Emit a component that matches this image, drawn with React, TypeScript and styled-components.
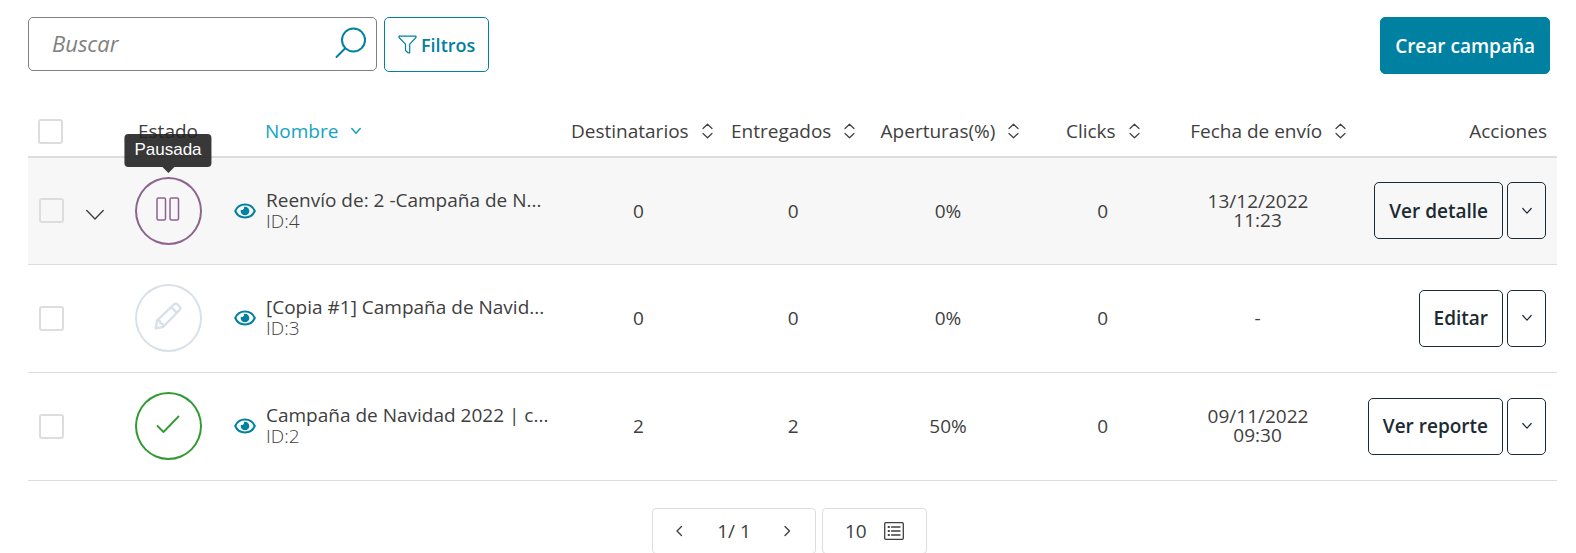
import React from "react";
import styled, { createGlobalStyle, css } from "styled-components";

const color = {
  text: "#404040",
  strong: "#1c2b33",
  primary: "#0081a1",
  active: "#12a3c1",
  line: "#dddddd",
  paused: "#8c648e",
  draft: "#d8e1e9",
  sent: "#339a33",
};

const GlobalStyle = createGlobalStyle`
  *, *::before, *::after { box-sizing: border-box; }
  body {
    margin: 0;
    background: #fff;
    color: ${color.text};
    font-family: "Open Sans", "Liberation Sans", sans-serif;
    font-size: 19px;
    line-height: 20px;
  }
  button, input { font: inherit; color: inherit; }
  svg { display: block; flex: none; }
`;

const Page = styled.main`
  padding: 17px 19px 0 28px;
`;

const Toolbar = styled.div`
  display: flex;
  align-items: flex-start;
  gap: 7px;
  padding-right: 7px;
  margin-bottom: 32px;
`;

const SearchBox = styled.label`
  display: flex;
  align-items: center;
  width: 349px;
  height: 54px;
  padding: 0 9px 2px 23px;
  border: 1px solid #808080;
  border-radius: 5px;
`;

const SearchInput = styled.input`
  flex: 1;
  min-width: 0;
  padding: 0;
  border: 0;
  outline: 0;
  background: none;
  font-size: 22px;
  line-height: 30px;
  &::placeholder {
    color: #808080;
    font-style: italic;
    opacity: 1;
  }
`;

const Button = styled.button<{ $kind?: "filter" | "primary" | "toggle" }>`
  display: inline-flex;
  align-items: center;
  justify-content: center;
  gap: 4px;
  height: 57px;
  padding: 0 14px;
  border: 1px solid ${color.strong};
  border-radius: 5px;
  background: transparent;
  color: ${color.strong};
  font-weight: 600;
  white-space: nowrap;
  cursor: pointer;
  ${({ $kind }) =>
    $kind === "filter" &&
    css`
      height: 55px;
      border-color: ${color.primary};
      color: ${color.primary};
      padding: 0 13px;
      font-size: 18px;
    `}
  ${({ $kind }) =>
    $kind === "primary" &&
    css`
      margin-left: auto;
      border-color: ${color.primary};
      background: ${color.primary};
      color: #fff;
    `}
  ${({ $kind }) =>
    $kind === "toggle" &&
    css`
      width: 39px;
      padding: 0;
    `}
`;

const Table = styled.table`
  width: 100%;
  table-layout: fixed;
  border-collapse: collapse;
`;

const Col = styled.col<{ $w?: number }>`
  ${({ $w }) => $w && `width: ${$w}px;`}
`;

type Align = "left" | "center" | "right";

const HeadCell = styled.th<{ $align?: Align; $indent?: number }>`
  height: 51px;
  padding: 0 10px 0 ${({ $indent = 10 }) => $indent}px;
  border-bottom: 2px solid ${color.line};
  font-weight: 400;
  text-align: ${({ $align = "center" }) => $align};
  white-space: nowrap;
`;

const Row = styled.tr<{ $hover?: boolean }>`
  height: 108px;
  border-bottom: 1px solid ${color.line};
  background: ${({ $hover }) => ($hover ? "#f7f7f7" : "transparent")};
  &:first-child {
    height: 107px;
  }
`;

const Cell = styled.td<{ $align?: Align; $indent?: number }>`
  padding: 0 10px 0 ${({ $indent = 10 }) => $indent}px;
  text-align: ${({ $align = "center" }) => $align};
`;

const Checkbox = styled.input`
  display: block;
  appearance: none;
  width: 25px;
  height: 25px;
  margin: 0;
  border: 2px solid ${color.line};
  border-radius: 3px;
`;

const SortButton = styled.button<{ $active?: boolean }>`
  display: inline-flex;
  align-items: center;
  gap: 13px;
  padding: 0;
  border: 0;
  background: none;
  color: ${({ $active }) => ($active ? color.active : "inherit")};
  cursor: pointer;
`;

const IconButton = styled.button`
  display: block;
  padding: 0;
  border: 0;
  background: none;
  color: ${({ color: c }) => c || "inherit"};
  cursor: pointer;
`;

const ExpandButton = styled(IconButton)`
  padding-top: 8px;
`;

const Status = styled.div<{ $tone: string }>`
  position: relative;
  display: flex;
  align-items: center;
  justify-content: center;
  width: 67px;
  height: 68px;
  margin: 0 auto;
  padding-bottom: 4px;
  border: 2px solid ${({ $tone }) => $tone};
  border-radius: 50%;
  color: ${({ $tone }) => $tone};
`;

const Tooltip = styled.span`
  position: absolute;
  left: 50%;
  bottom: calc(100% + 12px);
  transform: translateX(-50%);
  padding: 6px 10px 7px;
  border-radius: 4px;
  background: rgba(34, 34, 34, 0.9);
  color: #fff;
  font-family: "Liberation Sans", Arial, sans-serif;
  font-size: 17px;
  &::after {
    content: "";
    position: absolute;
    top: 100%;
    left: 50%;
    margin-left: -6px;
    border: 6px solid transparent;
    border-bottom: 0;
    border-top-color: rgba(34, 34, 34, 0.9);
  }
`;

const NameBlock = styled.div`
  display: flex;
  align-items: center;
  gap: 10px;
  white-space: nowrap;
`;

const NameText = styled.div`
  line-height: 21px;
`;

const Name = styled.div``;

const CampaignId = styled.div`
  font-weight: 300;
`;

const DateText = styled.time`
  display: block;
  width: 100px;
  margin: 0 auto;
  line-height: 19px;
`;

const Actions = styled.div`
  display: flex;
  justify-content: flex-end;
  gap: 4px;
  padding-right: 1px;
`;

const Pagination = styled.nav`
  display: flex;
  justify-content: center;
  gap: 6px;
  margin-top: 27px;
  padding-right: 6px;
`;

const PagerBox = styled.div<{ $w: number }>`
  display: flex;
  align-items: center;
  justify-content: space-between;
  width: ${({ $w }) => $w}px;
  height: 46px;
  padding: 0 22px;
  border: 1px solid ${color.line};
  border-radius: 4px;
`;

const line = {
  fill: "none",
  stroke: "currentColor",
  strokeLinecap: "round" as const,
  strokeLinejoin: "round" as const,
  "aria-hidden": true,
};

const SearchIcon = () => (
  <svg width="32" height="32" viewBox="0 0 32 32" {...line} stroke={color.primary} strokeWidth="2">
    <circle cx="18.5" cy="13" r="11.5" />
    <path d="M10 21.5 1.5 30" />
  </svg>
);

const FilterIcon = () => (
  <svg width="19" height="19" viewBox="0 0 19 19" {...line} strokeWidth="1.2">
    <path d="M1 1.2h17v1.3l-6.3 6.6v8.7H10l-2.5-2.3V9.1L1 2.5z" />
  </svg>
);

const SortIcon = () => (
  <svg width="11" height="16" viewBox="0 0 11 16" {...line} strokeWidth="1.2">
    <path d="M1 5.5 5.500 1.200 10 5.500M1 10.500 5.500 14.800 10 10.500" />
  </svg>
);

const ChevronDown = ({ size = 10, weight = 1.2 }: { size?: number; weight?: number }) => (
  <svg width={size} height={size} viewBox={`0 0 ${size} ${size}`} {...line} strokeWidth={weight}>
    <path d={`M.8 ${size / 4}L${size / 2} ${size * 0.72}L${size - 0.8} ${size / 4}`} />
  </svg>
);

const ChevronSide = ({ next }: { next?: boolean }) => (
  <svg width="10" height="12" viewBox="0 0 10 12" {...line} strokeWidth="1.4">
    <path d={next ? "M2 1.500 6.500 6 2 10.500" : "M6.500 1.500 2 6l4.500 4.500"} />
  </svg>
);

const EyeIcon = () => (
  <svg width="22" height="16" viewBox="0 0 22 16" fill="none" aria-hidden>
    <path d="M1.200 8C5-.6 17-.6 20.800 8 17 16.600 5 16.600 1.200 8z" stroke="currentColor" strokeWidth="2" strokeLinejoin="round" />
    <circle cx="11" cy="8" r="4.300" fill="currentColor" />
    <path d="M6.500 6.800 7.500 4.500 9.500 3.500 10.200 5 8.800 7z" fill="#fff" />
  </svg>
);

const PauseIcon = () => (
  <svg width="24" height="24" viewBox="0 0 24 24" {...line} strokeWidth="1.5">
    <rect x="1" y="1" width="8.5" height="22" rx="1.5" />
    <rect x="14" y="1" width="8.5" height="22" rx="1.5" />
  </svg>
);

const PencilIcon = () => (
  <svg width="28" height="28" viewBox="0 0 28 28" {...line} strokeWidth="2.4">
    <path d="M1.800 26.200l1.200-7.500L19.500 2.800c1.400-1.300 3.200-1.300 4.500 0l1.200 1.200c1.300 1.300 1.300 3 0 4.400L9 25z" />
    <path d="M17.300 5.200 22.800 10.700M3.500 18.700c2.300-.200 3.200.8 2.900 2.700 2-.2 3 .8 2.800 3" />
  </svg>
);

const CheckIcon = () => (
  <svg width="24" height="24" viewBox="0 0 24 24" {...line} strokeWidth="1.8">
    <path d="M1.500 14 7.500 20 22.500 4.500" />
  </svg>
);

const ListIcon = () => (
  <svg width="20" height="18" viewBox="0 0 20 18" {...line} strokeWidth="1.3">
    <rect x=".7" y=".7" width="18.6" height="16.6" rx="1" />
    <path d="M7.500 5h8.500M7.500 9h8.500M7.500 13h8.500" />
    <path d="M4.500 5h.6M4.500 9h.6M4.500 13h.6" strokeWidth="1.8" />
  </svg>
);

const metrics = ["Destinatarios", "Entregados", "Aperturas(%)", "Clicks", "Fecha de envío"];

const campaigns = [
  {
    id: 4,
    name: "Reenvío de: 2 -Campaña de N...",
    tone: color.paused,
    icon: <PauseIcon />,
    status: "Pausada",
    values: ["0", "0", "0%", "0"],
    date: "13/12/2022 11:23",
    action: "Ver detalle",
    hover: true,
  },
  {
    id: 3,
    name: "[Copia #1] Campaña de Navid...",
    tone: color.draft,
    icon: <PencilIcon />,
    values: ["0", "0", "0%", "0"],
    date: "-",
    action: "Editar",
  },
  {
    id: 2,
    name: "Campaña de Navidad 2022 | c...",
    tone: color.sent,
    icon: <CheckIcon />,
    values: ["2", "2", "50%", "0"],
    date: "09/11/2022 09:30",
    action: "Ver reporte",
  },
];

export default function App() {
  return (
    <Page>
      <GlobalStyle />
      <Toolbar>
        <SearchBox>
          <SearchInput type="text" placeholder="Buscar" aria-label="Buscar" />
          <SearchIcon />
        </SearchBox>
        <Button $kind="filter">
          <FilterIcon />
          Filtros
        </Button>
        <Button $kind="primary">Crear campaña</Button>
      </Toolbar>
      <Table>
        <colgroup>
          <Col $w={48} />
          <Col $w={38} />
          <Col $w={108} />
          <Col $w={339} />
          {metrics.map((m) => (
            <Col key={m} />
          ))}
          <Col $w={222} />
        </colgroup>
        <thead>
          <tr>
            <HeadCell $align="left">
              <Checkbox type="checkbox" aria-label="Seleccionar todas" />
            </HeadCell>
            <HeadCell />
            <HeadCell>Estado</HeadCell>
            <HeadCell $align="left" $indent={43}>
              <SortButton $active>
                Nombre
                <ChevronDown weight={1.5} />
              </SortButton>
            </HeadCell>
            {metrics.map((m) => (
              <HeadCell key={m}>
                <SortButton>
                  {m}
                  <SortIcon />
                </SortButton>
              </HeadCell>
            ))}
            <HeadCell $align="right">Acciones</HeadCell>
          </tr>
        </thead>
        <tbody>
          {campaigns.map((c) => (
            <Row key={c.id} $hover={c.hover}>
              <Cell $indent={11}>
                <Checkbox type="checkbox" aria-label={`Seleccionar campaña ${c.id}`} />
              </Cell>
              <Cell>
                {c.hover && (
                  <ExpandButton aria-label="Desplegar">
                    <ChevronDown size={18} weight={1.4} />
                  </ExpandButton>
                )}
              </Cell>
              <Cell>
                <Status $tone={c.tone}>
                  {c.icon}
                  {c.status && <Tooltip role="tooltip">{c.status}</Tooltip>}
                </Status>
              </Cell>
              <Cell $align="left" $indent={12}>
                <NameBlock>
                  <IconButton color={color.primary} aria-label="Vista previa">
                    <EyeIcon />
                  </IconButton>
                  <NameText>
                    <Name>{c.name}</Name>
                    <CampaignId>ID:{c.id}</CampaignId>
                  </NameText>
                </NameBlock>
              </Cell>
              {c.values.map((v, i) => (
                <Cell key={i}>{v}</Cell>
              ))}
              <Cell>
                <DateText>{c.date}</DateText>
              </Cell>
              <Cell>
                <Actions>
                  <Button>{c.action}</Button>
                  <Button $kind="toggle" aria-label="Más acciones">
                    <ChevronDown />
                  </Button>
                </Actions>
              </Cell>
            </Row>
          ))}
        </tbody>
      </Table>
      <Pagination aria-label="Paginación">
        <PagerBox $w={164}>
          <IconButton aria-label="Anterior">
            <ChevronSide />
          </IconButton>
          <span>1/ 1</span>
          <IconButton aria-label="Siguiente">
            <ChevronSide next />
          </IconButton>
        </PagerBox>
        <PagerBox $w={105}>
          <span>10</span>
          <IconButton aria-label="Resultados por página">
            <ListIcon />
          </IconButton>
        </PagerBox>
      </Pagination>
    </Page>
  );
}
